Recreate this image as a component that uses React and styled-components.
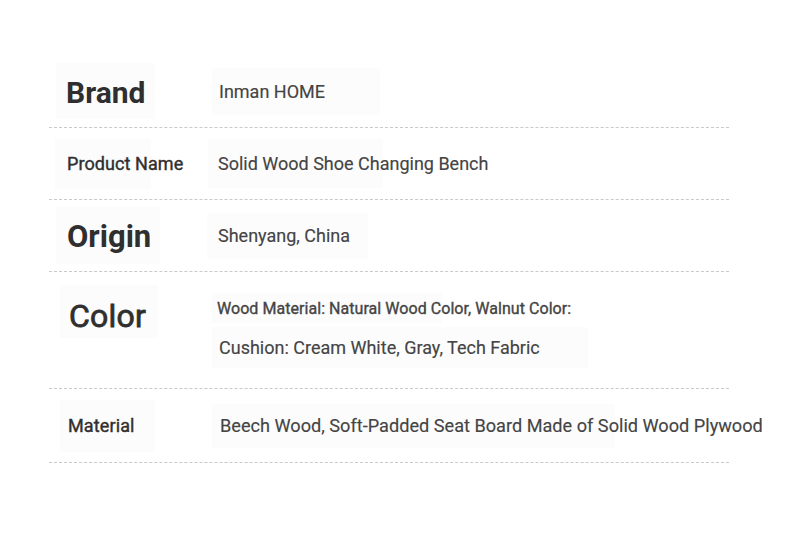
import React from "react";
import styled, { createGlobalStyle, css } from "styled-components";

const GlobalStyle = createGlobalStyle`
  html, body {
    margin: 0;
    padding: 0;
    background: #ffffff;
  }
  body {
    font-family: Roboto, "Liberation Sans", Arial, sans-serif;
  }
`;

// Roboto Medium is not available, so regular weight is thickened slightly
const medium = css`
  font-weight: 400;
  -webkit-text-stroke: ${(p) => p.$stroke || 0.4}px currentColor;
  letter-spacing: ${(p) => p.$track || 0}px;
`;

const Page = styled.div`
  width: 790px;
  height: 543px;
  padding: 55px 0 0 49px;
  box-sizing: border-box;
`;

const Table = styled.div`
  width: 680px;
  display: flex;
  flex-direction: column;
`;

const Row = styled.div`
  display: flex;
  align-items: ${(p) => (p.$top ? "flex-start" : "center")};
  height: ${(p) => p.$height}px;
  padding-top: ${(p) => p.$padTop || 0}px;
  box-sizing: border-box;
  border-bottom: 1px dashed #c9c9c9;
  white-space: nowrap;
`;

const LabelCell = styled.div`
  width: 158px;
  flex-shrink: 0;
  display: flex;
`;

const LabelBox = styled.div`
  display: flex;
  align-items: center;
  margin-left: ${(p) => p.$left}px;
  padding-left: ${(p) => p.$pad}px;
  padding-top: ${(p) => p.$drop || 0}px;
  width: ${(p) => p.$width}px;
  height: ${(p) => p.$h}px;
  background: #fcfcfc;
  color: #2f2f2f;
  font-size: ${(p) => p.$size}px;
  font-weight: 700;
  box-sizing: border-box;
  ${(p) => p.$medium && medium}
`;

const ValueCell = styled.div`
  display: flex;
  flex-direction: column;
  gap: 4px;
  margin-top: ${(p) => p.$drop || 0}px;
`;

const ValueBox = styled.div`
  display: flex;
  align-items: center;
  margin-left: ${(p) => p.$left}px;
  padding-left: ${(p) => p.$pad}px;
  width: ${(p) => p.$width}px;
  height: ${(p) => p.$h}px;
  background: #fcfcfc;
  color: #444444;
  font-size: ${(p) => p.$size || 18}px;
  font-weight: 400;
  -webkit-text-stroke: 0.15px currentColor;
  box-sizing: border-box;
  ${(p) => p.$medium && medium}
`;

export default function App() {
  return (
    <>
      <GlobalStyle />
      <Page>
        <Table>
          <Row $height={73}>
            <LabelCell>
              <LabelBox $left={7} $pad={10} $drop={2} $width={99} $h={56} $size={30}>
                Brand
              </LabelBox>
            </LabelCell>
            <ValueCell>
              <ValueBox $left={5} $pad={7} $width={168} $h={47}>
                Inman HOME
              </ValueBox>
            </ValueCell>
          </Row>
          <Row $height={72}>
            <LabelCell>
              <LabelBox $left={6} $pad={12} $width={96} $h={50} $size={18} $medium $track={0.08}>
                Product Name
              </LabelBox>
            </LabelCell>
            <ValueCell>
              <ValueBox $left={1} $pad={10} $width={175} $h={49}>
                Solid Wood Shoe Changing Bench
              </ValueBox>
            </ValueCell>
          </Row>
          <Row $height={72}>
            <LabelCell>
              <LabelBox $left={7} $pad={11} $drop={1} $width={104} $h={57} $size={31}>
                Origin
              </LabelBox>
            </LabelCell>
            <ValueCell>
              <ValueBox $left={0} $pad={11} $width={161} $h={46}>
                Shenyang, China
              </ValueBox>
            </ValueCell>
          </Row>
          <Row $height={117} $top $padTop={13}>
            <LabelCell>
              <LabelBox $left={11} $pad={9} $drop={9} $width={98} $h={53} $size={32} $medium $stroke={0.8} $track={0.2}>
                Color
              </LabelBox>
            </LabelCell>
            <ValueCell $drop={8}>
              <ValueBox $left={5} $pad={5} $width={230} $h={30} $size={16} $medium $stroke={0.35} $track={0.05}>
                Wood Material: Natural Wood Color, Walnut Color:
              </ValueBox>
              <ValueBox $left={5} $pad={7} $width={376} $h={41}>
                Cushion: Cream White, Gray, Tech Fabric
              </ValueBox>
            </ValueCell>
          </Row>
          <Row $height={74}>
            <LabelCell>
              <LabelBox $left={11} $pad={8} $width={95} $h={52} $size={18} $medium $track={0.12}>
                Material
              </LabelBox>
            </LabelCell>
            <ValueCell>
              <ValueBox $left={5} $pad={8} $width={403} $h={44} $size={18.15}>
                Beech Wood, Soft-Padded Seat Board Made of Solid Wood Plywood
              </ValueBox>
            </ValueCell>
          </Row>
        </Table>
      </Page>
    </>
  );
}
